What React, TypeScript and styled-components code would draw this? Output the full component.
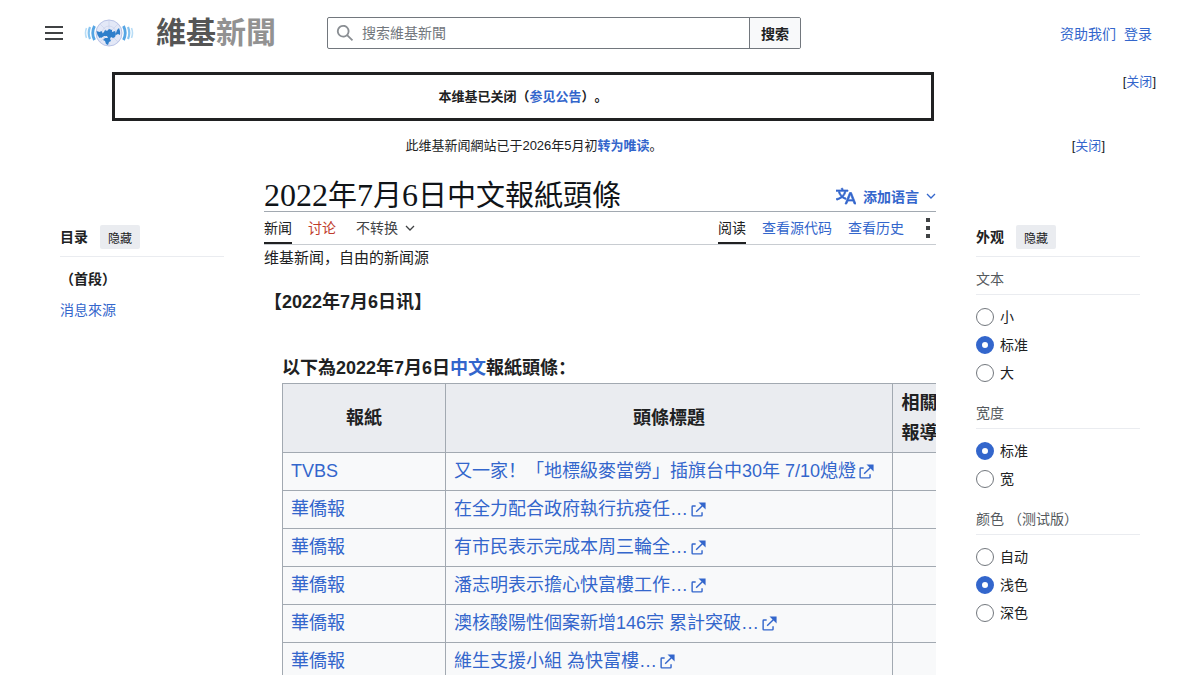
import React from 'react';
import styled, { createGlobalStyle, css } from 'styled-components';

const BLUE = '#3366cc';
const INK = '#202122';

const GlobalStyle = createGlobalStyle`
  * { box-sizing: border-box; }
  body {
    margin: 0;
    background: #fff;
    color: ${INK};
    font-family: "Liberation Sans", "Noto Sans CJK SC", sans-serif;
    font-size: 14px;
    line-height: 22px;
    overflow-x: hidden;
    text-spacing-trim: space-all;
  }
  button, input { font-family: inherit; color: inherit; }
`;

const Link = styled.a`
  color: ${BLUE};
  text-decoration: none;
  &:hover { text-decoration: underline; }
`;

const Header = styled.header`
  display: grid;
  grid-template-columns: 283px minmax(0, 474px) 1fr;
  align-items: center;
  height: 66px;
  padding: 0 48px 0 44px;
`;

const Brand = styled.div`
  display: flex;
  align-items: center;
`;

const MenuButton = styled.button`
  display: flex;
  width: 20px;
  height: 20px;
  padding: 0;
  border: 0;
  background: none;
`;

const HomeLink = styled.a`
  display: flex;
  align-items: center;
  margin-left: 20px;
  gap: 22px;
  color: #555;
  text-decoration: none;
  font-size: 30px;
  font-weight: 700;
  line-height: 40px;
`;

const Faded = styled.span`
  color: #929292;
`;

const SearchForm = styled.form`
  display: flex;
  height: 32px;
  border: 1px solid #72777d;
  border-radius: 2px;
  overflow: hidden;
`;

const SearchField = styled.label`
  display: flex;
  flex: 1;
  align-items: center;
  gap: 8px;
  padding-left: 8px;
`;

const SearchInput = styled.input`
  flex: 1;
  min-width: 0;
  height: 30px;
  padding: 0;
  border: 0;
  outline: 0;
  background: none;
  font-size: 14px;
  &::placeholder { color: #72777d; opacity: 1; }
`;

const SearchButton = styled.button`
  width: 51px;
  padding: 0;
  border: 0;
  border-left: 1px solid #72777d;
  background: #f8f9fa;
  font-size: 14px;
  font-weight: 700;
`;

const UserLinks = styled.nav`
  display: flex;
  justify-content: flex-end;
  gap: 8px;
  padding-top: 2px;
`;

const Notice = styled.div<{ $side: number; $end: number }>`
  display: flex;
  padding: 0 ${p => p.$end}px 0 44px;
  font-size: 13px;
  line-height: 20px;
  & > :last-child {
    width: ${p => p.$side}px;
    text-align: right;
  }
`;

const NoticeBody = styled.div`
  flex: 1;
  text-align: center;
`;

const ClosedBox = styled.div`
  margin: 6px 68px 15px;
  padding: 12px 0 11px;
  border: 3px solid ${INK};
  font-weight: 700;
`;

const Dismiss = styled.div<{ $drop?: boolean }>`
  padding-top: ${p => (p.$drop ? 6 : 0)}px;
`;

const Columns = styled.div`
  display: grid;
  grid-template-columns: 164px minmax(0, 1fr) 164px;
  column-gap: 40px;
  padding: 0 60px;
`;

const Sidebar = styled.aside`
  padding-top: 68px;
`;

const SidebarHead = styled.div`
  display: flex;
  align-items: center;
  gap: 12px;
  height: 33px;
  padding-bottom: 6px;
  border-bottom: 1px solid #eaecf0;
  font-weight: 700;
`;

const HideButton = styled.button`
  width: 40px;
  height: 24px;
  padding: 0;
  border: 0;
  border-radius: 2px;
  background: #eaecf0;
  font-size: 12px;
`;

const Contents = styled.ul`
  display: grid;
  gap: 9px;
  margin: 11px 0 0;
  padding: 0;
  list-style: none;
`;

const TopLink = styled.a`
  color: ${INK};
  font-weight: 700;
  text-decoration: none;
`;

const Group = styled.fieldset`
  margin: 0 0 4px;
  padding: 0;
  border: 0;
`;

const Legend = styled.legend`
  width: 100%;
  height: 38px;
  margin-bottom: 8px;
  padding: 11px 0 0;
  border-bottom: 1px solid #eaecf0;
  color: #54595d;
`;

const Choice = styled.label`
  display: flex;
  align-items: center;
  gap: 6px;
  height: 28px;
`;

const Radio = styled.input`
  appearance: none;
  width: 18px;
  height: 18px;
  margin: 0;
  border: 1px solid #72777d;
  border-radius: 50%;
  background: #fff;
  &:checked { border: 6px solid ${BLUE}; }
`;

const Article = styled.main`
  min-width: 0;
`;

const TitleRow = styled.div`
  display: flex;
  align-items: flex-end;
  justify-content: space-between;
  height: 56px;
  border-bottom: 1px solid #a2a9b1;
`;

const Title = styled.h1`
  margin: 0;
  color: #101418;
  font-family: "Liberation Serif", "Noto Sans CJK SC", serif;
  font-size: 29px;
  font-weight: 400;
  line-height: 30px;
`;

const Figures = styled.span`
  font-size: 32px;
  line-height: 30px;
`;

const LanguageButton = styled.button`
  display: flex;
  align-items: center;
  gap: 7px;
  height: 30px;
  padding: 0;
  border: 0;
  background: none;
  color: ${BLUE};
  font-size: 14px;
  font-weight: 700;
`;

const TabBar = styled.nav`
  display: flex;
  justify-content: space-between;
  height: 33px;
  border-bottom: 1px solid #c8ccd1;
`;

const TabGroup = styled.div`
  display: flex;
  gap: 16px;
`;

const tabStyle = css`
  height: 32px;
  padding: 5px 0 0;
  font-size: 14px;
  line-height: 22px;
`;

const Tab = styled.a<{ $tone?: 'current' | 'missing' }>`
  ${tabStyle}
  color: ${p => (p.$tone === 'current' ? INK : p.$tone === 'missing' ? '#bf3c2c' : BLUE)};
  border-bottom: ${p => (p.$tone === 'current' ? `2px solid ${INK}` : 0)};
  text-decoration: none;
`;

const VariantButton = styled.button`
  ${tabStyle}
  display: flex;
  gap: 7px;
  margin-left: 4px;
  border: 0;
  background: none;
  color: #404244;
  & > svg { margin-top: 6px; }
`;

const MoreButton = styled.button`
  display: flex;
  align-items: center;
  width: 16px;
  height: 32px;
  padding: 0;
  border: 0;
  background: none;
`;

const Tagline = styled.p`
  margin: 2px 0 0;
  font-size: 15px;
  line-height: 22px;
`;

const Body = styled.div`
  overflow: hidden;
  font-size: 18px;
  line-height: 30px;
`;

const Dateline = styled.p`
  margin: 18px 0 0;
  font-weight: 700;
`;

const Papers = styled.table`
  width: 664px;
  margin: 36px 0 0 18px;
  border-collapse: collapse;
  table-layout: fixed;
  background: #f8f9fa;
`;

const Caption = styled.caption`
  background: #fff;
  font-weight: 700;
  text-align: left;
`;

const HeadCell = styled.th`
  height: 69px;
  padding: 4px 8px;
  border: 1px solid #a2a9b1;
  background: #eaecf0;
`;

const Cell = styled.td`
  height: 38px;
  padding: 2px 8px 4px;
  border: 1px solid #a2a9b1;
  white-space: nowrap;
`;

const MenuIcon = () => (
  <svg width="20" height="20" viewBox="0 0 20 20" fill="#404244" aria-hidden="true">
    <path d="M1 3h18v2H1zM1 9h18v2H1zM1 15h18v2H1z" />
  </svg>
);

const SearchIcon = () => (
  <svg width="18" height="18" viewBox="0 0 20 20" fill="#8a8e93" aria-hidden="true">
    <path d="M12.2 13.6a7 7 0 1 1 1.4-1.4l5.4 5.4-1.4 1.4zM3 8a5 5 0 1 0 10 0A5 5 0 0 0 3 8" />
  </svg>
);

const Chevron = () => (
  <svg width="10" height="10" viewBox="0 0 10 10" fill="none" stroke="currentColor" strokeWidth="1.3" aria-hidden="true">
    <path d="M1 3l4 4 4-4" />
  </svg>
);

const LanguageIcon = () => (
  <svg width="20" height="20" viewBox="0 0 20 20" fill={BLUE} stroke={BLUE} strokeWidth=".7" aria-hidden="true">
    <path d="M20 18h-1.44a.6.6 0 0 1-.4-.12.8.8 0 0 1-.23-.31L17 15h-5l-1 2.54a.8.8 0 0 1-.22.3.6.6 0 0 1-.4.14H9l4.55-11.47h1.89zm-3.53-4.31L14.89 9.5a12 12 0 0 1-.39-1.24q-.09.37-.19.69l-.19.56-1.58 4.19zm-6.3-1.58a13.4 13.4 0 0 1-2.91-1.41 11.46 11.46 0 0 0 2.81-5.37H12V4H7.31a4 4 0 0 0-.2-.56C6.87 2.79 6.6 2 6.6 2l-1.47.5s.4.89.6 1.5H0v1.33h2.15A11.23 11.23 0 0 0 5 10.7a17.2 17.2 0 0 1-5 2.1q.56.82.87 1.38a23.3 23.3 0 0 0 5.22-2.51 15.6 15.6 0 0 0 3.56 1.77zM3.63 5.33h4.91a8.1 8.1 0 0 1-2.45 4.45 9.1 9.1 0 0 1-2.46-4.45" />
  </svg>
);

const DotsIcon = () => (
  <svg width="16" height="22" viewBox="0 0 16 22" fill="#404244" aria-hidden="true">
    <path d="M6 1h4v4H6zM6 9h4v4H6zM6 17h4v4H6z" />
  </svg>
);

const ExternalMark = styled.svg.attrs({ width: 17, height: 17, viewBox: '0 0 12 12', fill: BLUE })`
  margin-left: 2px;
  vertical-align: -3px;
`;

const Globe = () => (
  <svg width="50" height="30" viewBox="0 0 50 30" fill="none" aria-hidden="true">
    <circle cx="25" cy="15" r="13" fill="#e3e8f7" stroke="#b9c3e6" strokeWidth="1" />
    <path d="M25 2v26M12 15h26M16 6l18 18M34 6L16 24" stroke="#c6cfea" strokeWidth=".6" />
    <circle cx="25" cy="15" r="7" stroke="#c6cfea" strokeWidth=".6" />
    <path d="M12.500 13l3 1 2-1 1 2-1 4-2 1-2-3zM20 14l1-2 2 1 2-2 3 1 0 2 3-1 1 3-1 3-2 1-2-1-1 2 1 2-2 1-1 3-2-1-1-3-2-1 2-2 3 0-1-2-3 0-3 2-1-2zM33 12l2-2 1 3 0 4-2-1-2 1 0-2z" fill="#2f7fcb" />
    <path d="M10.500 8q-3.500 7 0 14M39.500 8q3.500 7 0 14" stroke="#55a5e4" strokeWidth="2.800" />
    <path d="M6 9q-2.600 6 0 12M44 9q2.600 6 0 12" stroke="#86c3ef" strokeWidth="2.200" />
    <path d="M2.500 10q-2 5 0 10M47.500 10q2 5 0 10" stroke="#b9ddf6" strokeWidth="1.600" />
  </svg>
);

const headlines = [
  ['TVBS', '又一家！「地標級麥當勞」插旗台中30年 7/10熄燈'],
  ['華僑報', '在全力配合政府執行抗疫任…'],
  ['華僑報', '有市民表示完成本周三輪全…'],
  ['華僑報', '潘志明表示擔心快富樓工作…'],
  ['華僑報', '澳核酸陽性個案新增146宗 累計突破…'],
  ['華僑報', '維生支援小組 為快富樓…'],
];

const settings = [
  { name: 'text', label: '文本', options: ['小', '标准', '大'], chosen: '标准' },
  { name: 'width', label: '宽度', options: ['标准', '宽'], chosen: '标准' },
  { name: 'colour', label: '颜色 （测试版）', options: ['自动', '浅色', '深色'], chosen: '浅色' },
];

export default function App() {
  return (
    <>
      <GlobalStyle />
      <Header>
        <Brand>
          <MenuButton aria-label="主菜单"><MenuIcon /></MenuButton>
          <HomeLink href="#">
            <Globe />
            <span>維基<Faded>新聞</Faded></span>
          </HomeLink>
        </Brand>
        <SearchForm role="search" onSubmit={e => e.preventDefault()}>
          <SearchField>
            <SearchIcon />
            <SearchInput type="search" placeholder="搜索維基新聞" aria-label="搜索維基新聞" />
          </SearchField>
          <SearchButton>搜索</SearchButton>
        </SearchForm>
        <UserLinks>
          <Link href="#">资助我们</Link>
          <Link href="#">登录</Link>
        </UserLinks>
      </Header>

      <Notice $side={154} $end={44}>
        <NoticeBody>
          <ClosedBox>本维基已关闭（<Link href="#">参见公告</Link>）。</ClosedBox>
        </NoticeBody>
        <Dismiss $drop>[<Link href="#">关闭</Link>]</Dismiss>
      </Notice>
      <Notice $side={81} $end={95}>
        <NoticeBody>
          此维基新闻網站已于2026年5月初<b><Link href="#">转为唯读</Link></b>。
        </NoticeBody>
        <Dismiss>[<Link href="#">关闭</Link>]</Dismiss>
      </Notice>

      <Columns>
        <Sidebar>
          <SidebarHead>目录<HideButton>隐藏</HideButton></SidebarHead>
          <Contents>
            <li><TopLink href="#">（首段）</TopLink></li>
            <li><Link href="#">消息來源</Link></li>
          </Contents>
        </Sidebar>

        <Article>
          <TitleRow>
            <Title>
              <Figures>2022</Figures>年<Figures>7</Figures>月<Figures>6</Figures>日中文報紙頭條
            </Title>
            <LanguageButton><LanguageIcon />添加语言<Chevron /></LanguageButton>
          </TitleRow>
          <TabBar>
            <TabGroup>
              <Tab href="#" $tone="current">新闻</Tab>
              <Tab href="#" $tone="missing">讨论</Tab>
              <VariantButton>不转换<Chevron /></VariantButton>
            </TabGroup>
            <TabGroup>
              <Tab href="#" $tone="current">阅读</Tab>
              <Tab href="#">查看源代码</Tab>
              <Tab href="#">查看历史</Tab>
              <MoreButton aria-label="更多"><DotsIcon /></MoreButton>
            </TabGroup>
          </TabBar>
          <Tagline>维基新闻，自由的新闻源</Tagline>
          <Body>
            <Dateline>【2022年7月6日讯】</Dateline>
            <Papers>
              <Caption>以下為2022年7月6日<Link href="#">中文</Link>報紙頭條：</Caption>
              <colgroup>
                <col width="163" />
                <col width="447" />
                <col width="54" />
              </colgroup>
              <thead>
                <tr>
                  <HeadCell scope="col">報紙</HeadCell>
                  <HeadCell scope="col">頭條標題</HeadCell>
                  <HeadCell scope="col">相關報導</HeadCell>
                </tr>
              </thead>
              <tbody>
                {headlines.map(([paper, headline]) => (
                  <tr key={headline}>
                    <Cell><Link href="#">{paper}</Link></Cell>
                    <Cell>
                      <Link href="#">
                        {headline}
                        <ExternalMark aria-hidden="true">
                          <path d="M6 1h5v5L8.860 3.850 4.700 8 4 7.300l4.150-4.160zM2 3h2v1H2v6h6V8h1v2a1 1 0 0 1-1 1H2a1 1 0 0 1-1-1V4a1 1 0 0 1 1-1" />
                        </ExternalMark>
                      </Link>
                    </Cell>
                    <Cell />
                  </tr>
                ))}
              </tbody>
            </Papers>
          </Body>
        </Article>

        <Sidebar>
          <SidebarHead>外观<HideButton>隐藏</HideButton></SidebarHead>
          {settings.map(({ name, label, options, chosen }) => (
            <Group key={name}>
              <Legend>{label}</Legend>
              {options.map(option => (
                <Choice key={option}>
                  <Radio type="radio" name={name} defaultChecked={option === chosen} />
                  {option}
                </Choice>
              ))}
            </Group>
          ))}
        </Sidebar>
      </Columns>
    </>
  );
}
